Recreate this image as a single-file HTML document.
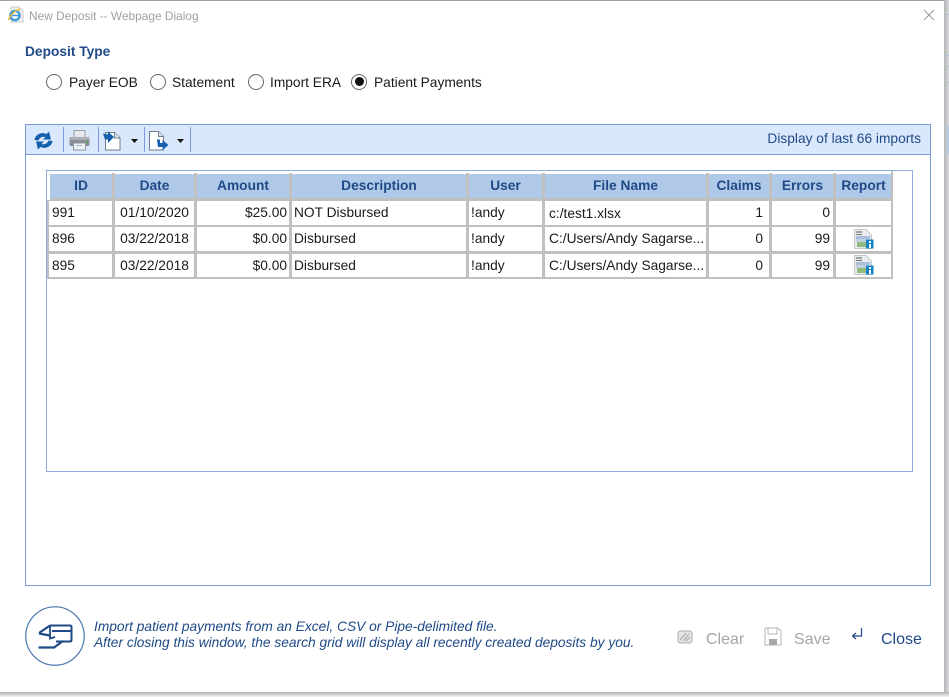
<!DOCTYPE html>
<html><head><meta charset="utf-8">
<style>
html,body{margin:0;padding:0;width:949px;height:697px;overflow:hidden;background:#fff;font-family:"Liberation Sans",sans-serif;}
div,span,svg{position:absolute;}
.t{white-space:nowrap;line-height:16px;font-size:13.75px;color:#1a1a1a;}
.h{background:#b0c9e8;color:#1f4a87;font-weight:bold;font-size:13.75px;text-align:center;line-height:24px;height:24px;box-shadow:0 -1px 0 #fff;}
.c{background:#fff;font-size:13.75px;color:#1a1a1a;line-height:24px;white-space:nowrap;overflow:hidden;box-sizing:border-box;}
.r{text-align:right;padding-right:2px;}
.radio{width:14px;height:14px;border:1.5px solid #666;border-radius:50%;background:#fff;top:74px;}
</style></head><body>
<!-- backdrop -->
<div style="left:944px;top:0;width:5px;height:697px;background:linear-gradient(90deg,#b5b5b5,#d8dadd);"></div>
<div style="left:946px;top:14px;width:3px;height:1px;background:#aebfdc;"></div>
<div style="left:946px;top:55px;width:3px;height:1px;background:#aebfdc;"></div>
<div style="left:946px;top:66px;width:3px;height:1px;background:#aebfdc;"></div>
<div style="left:946px;top:82px;width:3px;height:1px;background:#aebfdc;"></div>
<div style="left:946px;top:125px;width:3px;height:30px;background:#bcc8dc;"></div>
<div style="left:0;top:692px;width:949px;height:5px;background:linear-gradient(180deg,#b0b0b0,#f4f4f4);"></div>
<!-- dialog -->
<div style="left:0;top:0;width:944px;height:692px;background:#fff;border-top:1px solid #9aa3ad;box-sizing:border-box;"></div>
<!-- title -->
<svg style="left:7px;top:6px" width="17" height="17" viewBox="0 0 17 17"><path d="M4 1H12L16 5V16H4Z" fill="#f3f3f3" stroke="#c8c8c8"/><circle cx="8" cy="9.5" r="4.6" fill="#fff" stroke="#3f9ad8" stroke-width="2.4"/><path d="M4 9.5h8" stroke="#3f9ad8" stroke-width="1.6"/><path d="M1.5 14C3 9 8 4.5 13 3" fill="none" stroke="#e8b93c" stroke-width="1.5"/></svg>
<div class="t" style="left:29px;top:8px;font-size:11.9px;color:#a0a0a5;">New Deposit -- Webpage Dialog</div>
<svg style="left:923px;top:9px" width="12" height="12" viewBox="0 0 12 12"><path d="M1 1L11 11M11 1L1 11" stroke="#999" stroke-width="1"/></svg>
<!-- deposit type -->
<div class="t" style="left:25px;top:44px;font-weight:bold;color:#1f4a87;">Deposit Type</div>
<div class="radio" style="left:46px;"></div>
<div class="t" style="left:69px;top:75px;">Payer EOB</div>
<div class="radio" style="left:150px;"></div>
<div class="t" style="left:172px;top:75px;">Statement</div>
<div class="radio" style="left:248px;"></div>
<div class="t" style="left:270px;top:75px;">Import ERA</div>
<div class="radio" style="left:351px;"></div>
<div style="left:355px;top:77px;width:9px;height:9px;border-radius:50%;background:#111;"></div>
<div class="t" style="left:374px;top:75px;">Patient Payments</div>
<!-- panel -->
<div style="left:25px;top:124px;width:906px;height:462px;border:1px solid #7a9ad8;box-sizing:border-box;background:#fff;"></div>
<div style="left:26px;top:125px;width:904px;height:29px;background:#d9e8fc;border-bottom:1px solid #7a9ad8;"></div>
<div style="left:63px;top:127px;width:1px;height:25px;background:#7a9ad8;"></div>
<div style="left:98px;top:127px;width:1px;height:25px;background:#7a9ad8;"></div>
<div style="left:144px;top:127px;width:1px;height:25px;background:#7a9ad8;"></div>
<div style="left:190px;top:127px;width:1px;height:25px;background:#7a9ad8;"></div>
<!-- toolbar icons -->
<svg style="left:33px;top:131px" width="21" height="19" viewBox="0 0 21 19"><path d="M1.5 9C2 4 8 0.5 13.5 3L16 0.5L18 8.5L10 8.5L12.5 6C9.5 5 6.5 6.5 5.5 9.5Z" fill="#1660ac"/><path d="M19.5 10C19 15 13 18.5 7.5 16L5 18.5L3 10.5L11 10.5L8.5 13C11.5 14 14.5 12.5 15.5 9.5Z" fill="#1660ac"/></svg>
<svg style="left:69px;top:129px" width="21" height="22" viewBox="0 0 21 22"><rect x="5" y="1.5" width="11" height="8" fill="#e6e9ec" stroke="#9aa0a5"/><rect x="0.5" y="8" width="20" height="9" rx="1.5" fill="#8a9096"/><rect x="0.5" y="8" width="20" height="3" rx="1" fill="#a8aeb3"/><rect x="4.5" y="14" width="12" height="7" fill="#f0f3f6" stroke="#8f969c"/><rect x="7" y="16" width="6" height="1" fill="#9db4d4"/><rect x="17" y="12" width="2" height="2" fill="#4fa04f"/></svg>
<svg style="left:102px;top:130px" width="19" height="21" viewBox="0 0 19 21"><path d="M3.5 2.5H12.5L18 8V20H3.5Z" fill="#fff" stroke="#6f7d8c"/><path d="M12.5 2.5V8H18" fill="#dfe5ee" stroke="#6f7d8c"/><path d="M1 3.5L6 4.5L6 1.5L12 7L6 13L6 9.5L3 9.5Z" fill="#1660ac"/></svg>
<svg style="left:131px;top:139px" width="8" height="5"><path d="M0 0H7L3.5 4Z" fill="#111"/></svg>
<svg style="left:149px;top:130px" width="20" height="21" viewBox="0 0 20 21"><path d="M0.5 1.5H9.5L14.5 6.5V20H0.5Z" fill="#fff" stroke="#6f7d8c"/><path d="M9.5 1.5V6.5H14.5" fill="#dfe5ee" stroke="#6f7d8c"/><path d="M8 9.5L11 9.5L11 13L13.5 13L13.5 10L19.5 15L13.5 20L13.5 17L9 17Z" fill="#1660ac"/></svg>
<svg style="left:177px;top:139px" width="8" height="5"><path d="M0 0H7L3.5 4Z" fill="#111"/></svg>
<div class="t" style="right:28px;top:131px;color:#1f4a87;">Display of last 66 imports</div>
<!-- grid container -->
<div style="left:46px;top:170px;width:867px;height:302px;border:1px solid #8fabdf;box-sizing:border-box;background:#fff;"></div>
<div style="left:47px;top:173px;width:846px;height:106px;background:#c0c0c0;"></div>
<div style="left:47px;top:173px;width:3px;height:27px;background:#fff;"></div>
<div style="left:891px;top:171px;width:2px;height:29px;background:#c0c0c0;"></div>
<!-- header -->
<div class="h" style="left:50px;top:174px;width:62px;">ID</div>
<div class="h" style="left:115px;top:174px;width:79px;">Date</div>
<div class="h" style="left:197px;top:174px;width:92px;">Amount</div>
<div class="h" style="left:292px;top:174px;width:174px;">Description</div>
<div class="h" style="left:469px;top:174px;width:73px;">User</div>
<div class="h" style="left:545px;top:174px;width:161px;">File Name</div>
<div class="h" style="left:709px;top:174px;width:60px;">Claims</div>
<div class="h" style="left:772px;top:174px;width:61px;">Errors</div>
<div class="h" style="left:836px;top:174px;width:55px;">Report</div>
<!-- row 1 -->
<div class="c" style="left:49px;top:201px;width:63px;height:24px;padding-left:3px;">991</div>
<div class="c" style="left:115px;top:201px;width:79px;height:24px;text-align:center;">01/10/2020</div>
<div class="c r" style="left:197px;top:201px;width:92px;height:24px;">$25.00</div>
<div class="c" style="left:292px;top:201px;width:174px;height:24px;padding-left:2px;">NOT Disbursed</div>
<div class="c" style="left:469px;top:201px;width:73px;height:24px;padding-left:2px;">!andy</div>
<div class="c" style="left:545px;top:201px;width:161px;height:24px;padding-left:4px;line-height:26px;">c:/test1.xlsx</div>
<div class="c r" style="left:709px;top:201px;width:60px;height:24px;padding-right:6px;">1</div>
<div class="c r" style="left:772px;top:201px;width:61px;height:24px;padding-right:3px;">0</div>
<div class="c" style="left:836px;top:201px;width:55px;height:24px;"></div>
<!-- row 2 -->
<div class="c" style="left:49px;top:227px;width:63px;height:24px;padding-left:3px;">896</div>
<div class="c" style="left:115px;top:227px;width:79px;height:24px;text-align:center;">03/22/2018</div>
<div class="c r" style="left:197px;top:227px;width:92px;height:24px;">$0.00</div>
<div class="c" style="left:292px;top:227px;width:174px;height:24px;padding-left:2px;">Disbursed</div>
<div class="c" style="left:469px;top:227px;width:73px;height:24px;padding-left:2px;">!andy</div>
<div class="c" style="left:545px;top:227px;width:161px;height:24px;padding-left:4px;">C:/Users/Andy Sagarse...</div>
<div class="c r" style="left:709px;top:227px;width:60px;height:24px;padding-right:6px;">0</div>
<div class="c r" style="left:772px;top:227px;width:61px;height:24px;padding-right:3px;">99</div>
<div class="c" style="left:836px;top:227px;width:55px;height:24px;"></div>
<!-- row 3 -->
<div class="c" style="left:49px;top:254px;width:63px;height:23px;padding-left:3px;">895</div>
<div class="c" style="left:115px;top:254px;width:79px;height:23px;text-align:center;">03/22/2018</div>
<div class="c r" style="left:197px;top:254px;width:92px;height:23px;">$0.00</div>
<div class="c" style="left:292px;top:254px;width:174px;height:23px;padding-left:2px;">Disbursed</div>
<div class="c" style="left:469px;top:254px;width:73px;height:23px;padding-left:2px;">!andy</div>
<div class="c" style="left:545px;top:254px;width:161px;height:23px;padding-left:4px;">C:/Users/Andy Sagarse...</div>
<div class="c r" style="left:709px;top:254px;width:60px;height:23px;padding-right:6px;">0</div>
<div class="c r" style="left:772px;top:254px;width:61px;height:23px;padding-right:3px;">99</div>
<div class="c" style="left:836px;top:254px;width:55px;height:23px;"></div>
<!-- report icons -->
<svg style="left:854px;top:229px" width="20" height="20" viewBox="0 0 20 20"><path d="M0.5 0.5H12L17.5 6V19.5H0.5Z" fill="#e9ecee" stroke="#b5babf" stroke-width=".8"/><rect x="2" y="2.5" width="6" height="1" fill="#555"/><rect x="2" y="5" width="6" height="1" fill="#777"/><rect x="2" y="7" width="14" height="3" fill="#a9bedb"/><rect x="2" y="10" width="11" height="3" fill="#c2cfe0"/><rect x="3" y="13" width="9" height="5" fill="#8fbc7c"/><rect x="12" y="10.5" width="7.5" height="9" fill="#1383c8"/><rect x="15" y="12" width="2" height="2" fill="#fff"/><rect x="15" y="15" width="2" height="4" fill="#fff"/></svg>
<svg style="left:854px;top:255px" width="20" height="20" viewBox="0 0 20 20"><path d="M0.5 0.5H12L17.5 6V19.5H0.5Z" fill="#e9ecee" stroke="#b5babf" stroke-width=".8"/><rect x="2" y="2.5" width="6" height="1" fill="#555"/><rect x="2" y="5" width="6" height="1" fill="#777"/><rect x="2" y="7" width="14" height="3" fill="#a9bedb"/><rect x="2" y="10" width="11" height="3" fill="#c2cfe0"/><rect x="3" y="13" width="9" height="5" fill="#8fbc7c"/><rect x="12" y="10.5" width="7.5" height="9" fill="#1383c8"/><rect x="15" y="12" width="2" height="2" fill="#fff"/><rect x="15" y="15" width="2" height="4" fill="#fff"/></svg>
<!-- footer -->
<svg style="left:25px;top:606px" width="60" height="60" viewBox="0 0 60 60"><circle cx="30" cy="30" r="29.2" fill="#fff" stroke="#4a76b0" stroke-width="1.2"/><path d="M25 19.5H45Q46.5 19.5 46.5 21V34Q46.5 35.5 45 35.5H31" fill="none" stroke="#1f4a87" stroke-width="2"/><path d="M27 25H46" fill="none" stroke="#1f4a87" stroke-width="2"/><path d="M14 27L25 19.5M14 27.5L24.5 29.5" fill="none" stroke="#1f4a87" stroke-width="2.2"/><path d="M25 19.5V32.5L30 31" fill="none" stroke="#1f4a87" stroke-width="1.8"/><path d="M13.5 41.5H29L38 35" fill="none" stroke="#1f4a87" stroke-width="2.2"/></svg>
<div class="t" style="left:94px;top:619px;font-style:italic;color:#1f4a87;">Import patient payments from an Excel, CSV or Pipe-delimited file.</div>
<div class="t" style="left:94px;top:635px;font-style:italic;color:#1f4a87;">After closing this window, the search grid will display all recently created deposits by you.</div>
<svg style="left:677px;top:630px" width="16" height="14" viewBox="0 0 16 14"><rect x="1" y="1" width="14" height="12" rx="2.5" fill="#e4e4e4" stroke="#ababab"/><path d="M3 10L9 3M6 11L12 4M9 11L13 7" stroke="#a5a5a5"/></svg>
<div class="t" style="left:706px;top:632px;font-size:16px;color:#a6a6a6;">Clear</div>
<svg style="left:764px;top:627px" width="18" height="19" viewBox="0 0 18 19"><path d="M1 1H14L17 4V18H1Z" fill="#fff" stroke="#b5b5b5"/><rect x="4" y="1" width="9" height="6" fill="#fff" stroke="#b5b5b5"/><rect x="5" y="12" width="8" height="6" fill="#a8a8a8"/></svg>
<div class="t" style="left:794px;top:632px;font-size:16px;color:#a6a6a6;">Save</div>
<svg style="left:851px;top:627px" width="13" height="14" viewBox="0 0 13 14"><path d="M10.5 1V9H2M5 6L1.5 9L5 12" fill="none" stroke="#1f4a87" stroke-width="1.2"/></svg>
<div class="t" style="left:881px;top:632px;font-size:16px;color:#1f4a87;">Close</div>
</body></html>
